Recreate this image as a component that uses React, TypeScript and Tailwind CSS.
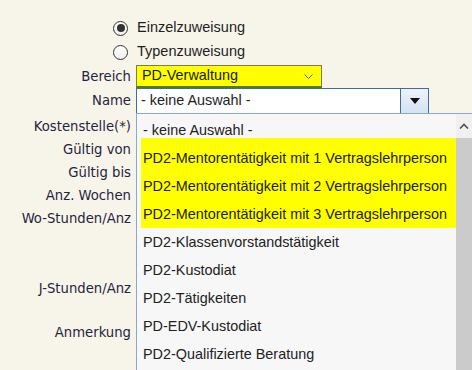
import React from "react";

const labelFont = { fontFamily: "'DejaVu Sans Condensed', 'DejaVu Sans', sans-serif", fontStretch: "condensed" as const };

function Label({ children, h, mt = 0 }: { children: React.ReactNode; h: number; mt?: number }) {
  return (
    <div className="flex items-center justify-end w-[131px] text-[14.7px] text-[#1f2440] whitespace-nowrap" style={{ height: h, marginTop: mt, ...labelFont }}>
      {children}
    </div>
  );
}

function Radio({ checked }: { checked?: boolean }) {
  return (
    <div className="w-[15px] h-[15px] rounded-full border border-[#333333] bg-gradient-to-b from-[#ffffff] to-[#f0f0f0] flex items-center justify-center">
      {checked && <div className="w-[8px] h-[8px] rounded-full bg-[#333333]" />}
    </div>
  );
}

const items = [
  "PD2-Klassenvorstandstätigkeit",
  "PD2-Kustodiat",
  "PD2-Tätigkeiten",
  "PD-EDV-Kustodiat",
  "PD2-Qualifizierte Beratung",
];

export default function App() {
  return (
    <div className="relative w-[472px] h-[370px] overflow-hidden bg-[#f7f5ea]" style={{ fontFamily: "'Liberation Sans', Arial, sans-serif" }}>
      <div className="pt-[16px]">
        <div className="h-[24px] flex items-center pl-[113px] gap-[9px] text-[14.5px] text-[#1e1e1e]">
          <Radio checked />
          <span>Einzelzuweisung</span>
        </div>
        <div className="h-[24px] flex items-center pl-[113px] gap-[9px] text-[14.5px] text-[#1e1e1e]">
          <Radio />
          <span>Typenzuweisung</span>
        </div>
        <div className="h-[24px] flex items-start">
          <Label h={24}>Bereich</Label>
          <div className="ml-[5px] mt-[1px] w-[186px] h-[23px] bg-[#ffff00] border border-[#7d7d55] border-b-2 border-b-[#557a16] flex items-center pl-[5px] pr-[8px] text-[14.4px] text-[#1a1a00]">
            <span className="flex-1">PD-Verwaltung</span>
            <svg width="9" height="5" viewBox="0 0 9 5" className="mt-[1px]">
              <path d="M0.5 0.5 L4.5 4.5 L8.5 0.5" fill="none" stroke="#555" strokeWidth="1" />
            </svg>
          </div>
        </div>
        <div className="h-[25px] flex items-start">
          <Label h={25}>Name</Label>
          <div className="ml-[5px] w-[293px] h-[26px] border border-[#3a6ea8] bg-white flex text-[14.4px] text-[#1e1e1e]">
            <div className="flex-1 flex items-center pl-[4px]">- keine Auswahl -</div>
            <div className="w-[28px] h-full border-l border-[#3a6ea8] bg-gradient-to-b from-[#eef3fa] to-[#d6e2f0] flex items-center justify-center">
              <svg width="10" height="6" viewBox="0 0 10 6">
                <path d="M0 0 L10 0 L5 6 Z" fill="#111" />
              </svg>
            </div>
          </div>
        </div>
        <Label h={23} mt={2}>Kostenstelle(*)</Label>
        <Label h={23}>Gültig von</Label>
        <Label h={23}>Gültig bis</Label>
        <Label h={23}>Anz. Wochen</Label>
        <Label h={23}>Wo-Stunden/Anz</Label>
        <Label h={23} mt={47}>J-Stunden/Anz</Label>
        <Label h={23} mt={21}>Anmerkung</Label>
      </div>

      <div className="absolute left-[136px] top-[113px] right-0 bottom-0 border-l border-t border-[#86a9d6] bg-[#f7f7f7] flex text-[14.4px] text-[#222222]">
        <div className="flex-1 flex flex-col">
          <div className="h-[24px] pt-[8px] leading-[16px] pl-[6px]">- keine Auswahl -</div>
          <div className="ml-[4px] bg-[#ffff00] text-[#1c1c00]">
            <div className="h-[34px] pt-[6px] leading-[28px] pl-[2px] whitespace-nowrap">PD2-Mentorentätigkeit mit 1 Vertragslehrperson</div>
            <div className="h-[28px] leading-[28px] pl-[2px] whitespace-nowrap">PD2-Mentorentätigkeit mit 2 Vertragslehrperson</div>
            <div className="h-[28px] leading-[28px] pl-[2px] whitespace-nowrap">PD2-Mentorentätigkeit mit 3 Vertragslehrperson</div>
          </div>
          {items.map((t) => (
            <div key={t} className="h-[28px] leading-[28px] pl-[6px] whitespace-nowrap">{t}</div>
          ))}
        </div>
        <div className="w-[16px] flex flex-col bg-[#cbcbcb]">
          <div className="h-[24px] bg-[#f0f0f0] flex items-center justify-center">
            <svg width="10" height="6" viewBox="0 0 10 6">
              <path d="M1 5.5 L5 1.5 L9 5.5" fill="none" stroke="#505050" strokeWidth="1.6" />
            </svg>
          </div>
        </div>
      </div>
    </div>
  );
}
